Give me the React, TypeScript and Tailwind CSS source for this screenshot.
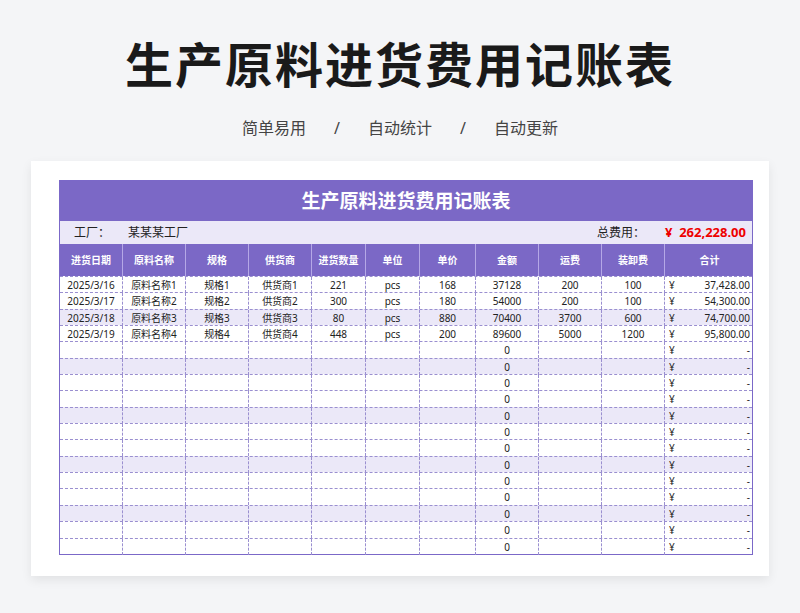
const cols = "grid-cols-[63px_63px_63px_63px_54px_54px_56px_63px_63px_63px_89px]";
const font = { fontFamily: '"Noto Sans", "Noto Sans CJK SC", sans-serif' };

const heads = ["进货日期", "原料名称", "规格", "供货商", "进货数量", "单位", "单价", "金额", "运费", "装卸费", "合计"];
const data = [
  ["2025/3/16", "原料名称1", "规格1", "供货商1", "221", "pcs", "168", "37128", "200", "100", "37,428.00"],
  ["2025/3/17", "原料名称2", "规格2", "供货商2", "300", "pcs", "180", "54000", "200", "100", "54,300.00"],
  ["2025/3/18", "原料名称3", "规格3", "供货商3", "80", "pcs", "880", "70400", "3700", "600", "74,700.00"],
  ["2025/3/19", "原料名称4", "规格4", "供货商4", "448", "pcs", "200", "89600", "5000", "1200", "95,800.00"],
];
const rows = [...data, ...Array.from({ length: 13 }, () => ["", "", "", "", "", "", "", "0", "", "", "-"])];

export default function App() {
  return (
    <div className="w-[800px] h-[613px] bg-[#f4f5f7] flex flex-col items-center" style={font}>
      <h1 className="mt-[30px] text-[48px] leading-[70px] font-bold text-[#1a1a1a] tracking-[2px]">生产原料进货费用记账表</h1>
      <div className="mt-[16px] flex gap-[28px] text-[16px] text-[#444]">
        <span>简单易用</span><span>/</span><span>自动统计</span><span>/</span><span>自动更新</span>
      </div>
      <div className="mt-[21px] w-[738px] bg-white shadow-[0_4px_10px_rgba(0,0,0,0.08)] pt-[19px] pb-[21px] pl-[28px]">
        <div className="w-[694px] border border-[#7b68c8]">
          <div className="h-[40px] bg-[#7b68c6] flex items-center justify-center text-white text-[19px] font-bold">生产原料进货费用记账表</div>
          <div className="h-[23px] bg-[#ebe8f8] flex items-center text-[12px] text-[#222]">
            <span className="ml-[14px]">工厂：</span>
            <span className="ml-[18px]">某某某工厂</span>
            <span className="ml-auto">总费用：</span>
            <span className="ml-[20px] mr-[6px] text-[#e00] font-bold text-[13px]">¥&nbsp;&nbsp;262,228.00</span>
          </div>
          <div className={`grid ${cols} h-[32px] bg-[#7b68c6] text-white text-[10px] font-bold`}>
            {heads.map((h, i) => (
              <div key={i} className={`flex items-center justify-center ${i < 10 ? "border-r border-[#b5a8e6]" : ""}`}>{h}</div>
            ))}
          </div>
          {rows.map((r, ri) => (
            <div key={ri} className={`grid ${cols} h-[16.35px] text-[10px] leading-[16px] text-[#222] border-t border-dashed border-[#9a8fd0] ${ri % 3 === 2 ? "bg-[#ebe8f8]" : "bg-white"}`}>
              {r.map((c, ci) => (
                <div key={ci} className={`${ci < 10 ? "border-r border-dashed border-[#9a8fd0]" : ""} ${ci === 10 ? "flex justify-between px-[4px]" : "text-center"}`}>
                  {ci === 10 ? (<><span>¥</span><span>{c}</span></>) : c}
                </div>
              ))}
            </div>
          ))}
        </div>
      </div>
    </div>
  );
}
